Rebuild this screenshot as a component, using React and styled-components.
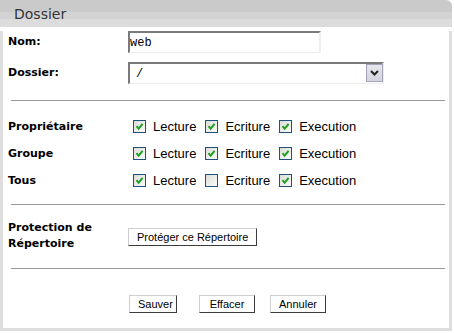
import styled, { createGlobalStyle } from 'styled-components'

const GlobalStyle = createGlobalStyle`
  body {
    margin: 0;
    background: #fff;
    font-family: 'Liberation Sans', Arial, sans-serif;
  }
`

const Panel = styled.div`
  width: 452px;
`

const Header = styled.div`
  height: 27px;
  box-sizing: border-box;
  padding-left: 14px;
  display: flex;
  align-items: center;
  border-top-right-radius: 6px;
  background: linear-gradient(#cacaca 0 12px, #d3d3d3 12px 19px, #dcdcdc 19px);
  font-family: 'DejaVu Sans', Verdana, sans-serif;
  font-size: 14px;
  color: #333;
`

const Body = styled.form`
  margin: 0;
  border: 3px solid #dedede;
  border-top: 0;
  padding: 0 4px 15px 5px;
`

const Row = styled.div`
  display: grid;
  grid-template-columns: 120px 1fr;
  align-items: center;
  min-height: ${(p) => p.$h || 22}px;
  margin-top: ${(p) => p.$mt || 0}px;
`

const Label = styled.div`
  font-family: 'DejaVu Sans', Verdana, sans-serif;
  font-weight: bold;
  font-size: 11px;
  line-height: 16px;
  color: #000;
`

const TextInput = styled.input`
  box-sizing: border-box;
  width: 193px;
  height: 22px;
  margin: 0;
  padding: 0;
  border-style: solid;
  border-width: 2px 2px 1px 2px;
  border-color: #7a7a7a #eeeeee #eeeeee #7a7a7a;
  background: #fff;
  font-family: 'Liberation Mono', 'Courier New', monospace;
  font-size: 12px;
  color: #000;
  outline: none;
`

const SelectWrap = styled.div`
  position: relative;
  width: 256px;
  height: 22px;
`

const Select = styled.select`
  appearance: none;
  box-sizing: border-box;
  width: 100%;
  height: 22px;
  margin: 0;
  padding: 0 0 0 6px;
  border-style: solid;
  border-width: 2px 2px 1px 2px;
  border-color: #7a7a7a #eeeeee #eeeeee #7a7a7a;
  background: #fff;
  font-family: 'Liberation Mono', 'Courier New', monospace;
  font-size: 12px;
  color: #000;
  outline: none;
`

const ArrowBox = styled.span`
  position: absolute;
  top: 2px;
  right: 1px;
  width: 17px;
  height: 18px;
  box-sizing: border-box;
  border: 1px solid #a2a2b8;
  background: linear-gradient(#e6e6ee, #d4d4e0);
  display: flex;
  align-items: center;
  justify-content: center;
  pointer-events: none;
`

const Divider = styled.hr`
  margin: ${(p) => p.$mt || 0}px 0 0 3px;
  border: 0;
  border-top: 1px solid #999;
  height: 0;
`

const Perms = styled.div`
  display: flex;
  align-items: center;
  padding-left: 5px;
`

const Check = styled.span`
  width: 13px;
  height: 13px;
  box-sizing: border-box;
  border: 1px solid #1c5180;
  background: linear-gradient(135deg, #dcdcd7, #fbfbf9);
  display: inline-flex;
  align-items: center;
  justify-content: center;
  margin-left: ${(p) => (p.$first ? 0 : 9)}px;
`

const CheckText = styled.span`
  margin-left: 7px;
  font-size: 13px;
  color: #000;
`

const Button = styled.button`
  box-sizing: border-box;
  height: 18px;
  width: ${(p) => (p.$w ? `${p.$w}px` : 'auto')};
  margin: 0 0 0 ${(p) => p.$ml || 0}px;
  padding: 0 8px;
  background: #fff;
  border-style: solid;
  border-width: 1px;
  border-color: #cfcfcf #3c3c3c #3c3c3c #cfcfcf;
  font-family: 'Liberation Sans', Arial, sans-serif;
  font-size: 11px;
  color: #000;
  line-height: 16px;
`

const Actions = styled.div`
  display: flex;
  align-items: center;
  padding-left: 1px;
`

function Box({ checked, first, children }) {
  return (
    <>
      <Check $first={first}>
        {checked && (
          <svg width="11" height="11" viewBox="0 0 11 11">
            <path d="M2.5 5.2 L4.6 7.6 L8.6 2.8" fill="none" stroke="#21a121" strokeWidth="2" />
          </svg>
        )}
      </Check>
      <CheckText>{children}</CheckText>
    </>
  )
}

const perms = [
  { name: 'Propriétaire', r: true, w: true, x: true },
  { name: 'Groupe', r: true, w: true, x: true },
  { name: 'Tous', r: true, w: false, x: true },
]

export default function App() {
  return (
    <Panel>
      <GlobalStyle />
      <Header>Dossier</Header>
      <Body onSubmit={(e) => e.preventDefault()}>
        <Row $mt={4}>
          <Label>Nom:</Label>
          <TextInput defaultValue="web" />
        </Row>
        <Row $mt={9}>
          <Label>Dossier:</Label>
          <SelectWrap>
            <Select defaultValue="/">
              <option value="/">/</option>
            </Select>
            <ArrowBox>
              <svg width="9" height="6" viewBox="0 0 9 6">
                <path d="M1 1 L4.5 4.5 L8 1" fill="none" stroke="#222" strokeWidth="2" />
              </svg>
            </ArrowBox>
          </SelectWrap>
        </Row>
        <Divider $mt={16} />
        {perms.map((p, i) => (
          <Row key={p.name} $h={27} $mt={i === 0 ? 12 : 0}>
            <Label>{p.name}</Label>
            <Perms>
              <Box checked={p.r} first>Lecture</Box>
              <Box checked={p.w}>Ecriture</Box>
              <Box checked={p.x}>Execution</Box>
            </Perms>
          </Row>
        ))}
        <Divider $mt={10} />
        <Row $h={32} $mt={15}>
          <Label>Protection de Répertoire</Label>
          <div>
            <Button type="button">Protéger ce Répertoire</Button>
          </div>
        </Row>
        <Divider $mt={16} />
        <Row $h={18} $mt={26}>
          <span />
          <Actions>
            <Button type="submit" $w={48}>Sauver</Button>
            <Button type="reset" $w={56} $ml={22}>Effacer</Button>
            <Button type="button" $w={56} $ml={15}>Annuler</Button>
          </Actions>
        </Row>
      </Body>
    </Panel>
  )
}
